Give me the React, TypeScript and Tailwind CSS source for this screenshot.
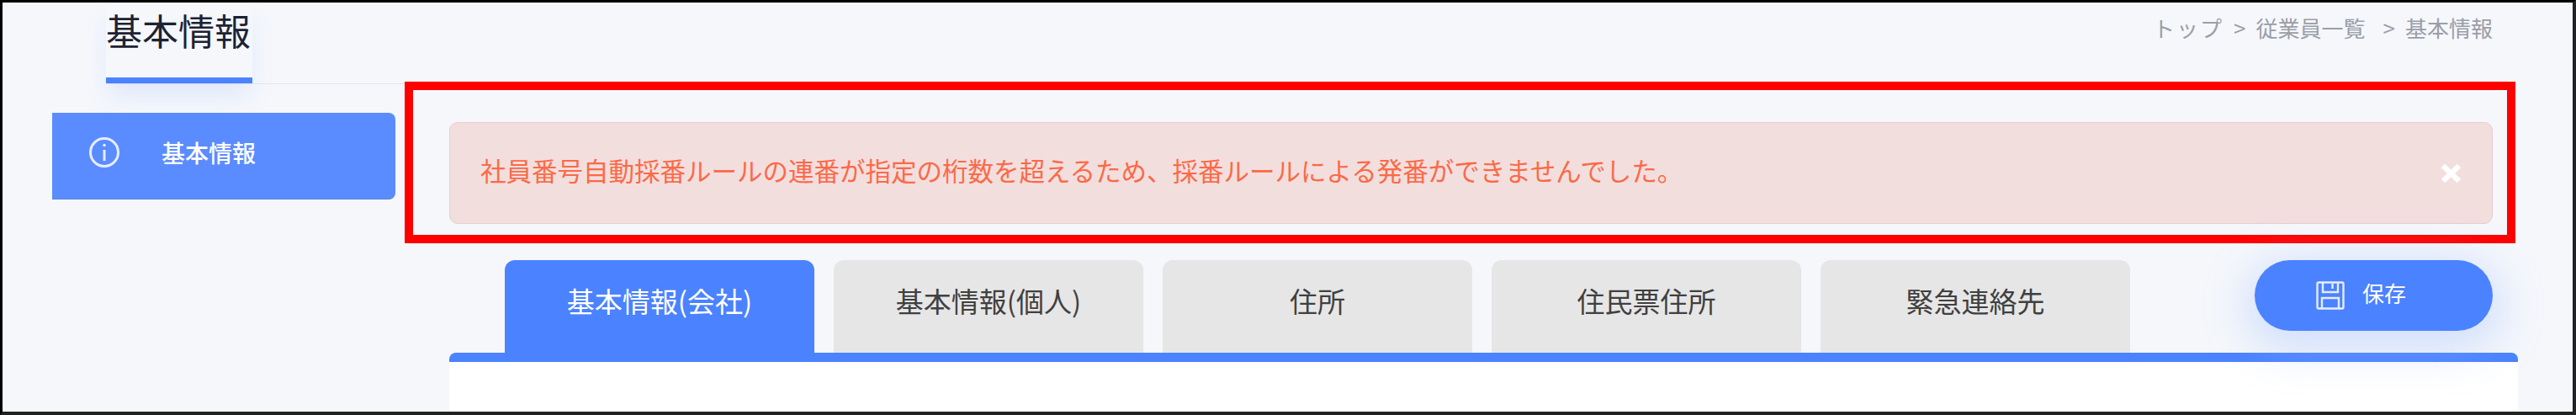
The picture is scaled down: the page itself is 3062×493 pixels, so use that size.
const TABS = ["基本情報(会社)", "基本情報(個人)", "住所", "住民票住所", "緊急連絡先"];

function InfoIcon() {
  return (
    <svg width="38" height="38" viewBox="0 0 38 38" fill="none" stroke="#fff" className="shrink-0 opacity-85">
      <circle cx="19" cy="19" r="16.5" strokeWidth="3" />
      <line x1="19" y1="16" x2="19" y2="29" strokeWidth="3" />
      <circle cx="19" cy="10.5" r="1.8" fill="#fff" stroke="none" />
    </svg>
  );
}

function SaveIcon() {
  return (
    <svg width="34" height="34" viewBox="0 0 34 34" fill="none" stroke="#fff" strokeWidth="2.4" className="shrink-0 opacity-85">
      <path d="M3 1.5H31A1.5 1.5 0 0 1 32.500 3V31A1.500 1.500 0 0 1 31 32.500H3A1.500 1.500 0 0 1 1.500 31V3A1.500 1.500 0 0 1 3 1.500Z" />
      <path d="M8 2V13H26V2" />
      <path d="M19.500 3V9" />
      <path d="M7 32V20H27V32" />
    </svg>
  );
}

function CloseIcon() {
  return (
    <svg width="25" height="24" viewBox="0 0 25 24" stroke="#fff" strokeWidth="6.5" className="shrink-0">
      <line x1="3" y1="3" x2="22" y2="21" />
      <line x1="22" y1="3" x2="3" y2="21" />
    </svg>
  );
}

export default function App() {
  return (
    <div className="relative flex h-[493px] w-[3062px] flex-col overflow-hidden border-t-[3px] border-r-4 border-b-4 border-l-[3px] border-t-black border-r-[#222222] border-b-[#222222] border-l-black bg-[#f5f7fb] font-['Noto_Sans_CJK_JP',sans-serif]">
      <header className="mr-[95px] ml-[123px] flex h-[97px] shrink-0 items-start justify-between border-b border-[#e3e6f0]">
        <div className="h-[96px] w-[174px] border-b-[7px] border-[#4b82ff] pt-[4px] text-[43px] leading-[56px] text-[#1d2233] shadow-[0_18px_30px_-4px_rgba(91,140,255,0.14)]">
          基本情報
        </div>
        <nav className="flex pt-[12px] text-[26px] leading-[36px] text-[#9a9ea8]">
          <span className="tracking-[2px]">トップ</span>
          <span className="ml-[12px]">&gt;</span>
          <span className="ml-[12px]">従業員一覧</span>
          <span className="ml-[21px]">&gt;</span>
          <span className="ml-[12px]">基本情報</span>
        </nav>
      </header>

      <div className="flex min-h-0 flex-1">
        <aside className="ml-[59px] w-[408px] shrink-0 pt-[34px]">
          <div className="flex h-[103px] items-center rounded-r-[8px] border-b border-[#5a84dc] bg-[#5b8cff] pb-[9px] pl-[43px] text-[28px] font-medium text-white">
            <InfoIcon />
            <span className="ml-[49px] leading-none">基本情報</span>
          </div>
        </aside>

        <main className="ml-[64px] flex w-[2459px] min-w-0 flex-col pt-[45px]">
          <div className="mr-[30px] flex h-[121px] shrink-0 items-center justify-between rounded-[10px] border border-[#ebcccc] bg-[#f3dede] pr-[36px] pl-[36px] text-[30.5px] text-[#fb6a47]">
            <span className="pb-[6px]">社員番号自動採番ルールの連番が指定の桁数を超えるため、採番ルールによる発番ができませんでした。</span>
            <CloseIcon />
          </div>

          <div className="mt-[43px] flex shrink-0 items-start pr-[30px] pl-[66px]">
            <div className="flex gap-[23px]">
              {TABS.map((tab, i) => (
                <button
                  key={tab}
                  type="button"
                  className={
                    i === 0
                      ? "h-[110px] w-[368px] rounded-t-[12px] bg-[#4b82ff] pb-[12px] text-[33px] text-white"
                      : "h-[110px] w-[368px] rounded-t-[12px] bg-[#e6e6e6] pb-[12px] text-[33px] text-[#404040]"
                  }
                >
                  {tab}
                </button>
              ))}
            </div>
            <button
              type="button"
              className="relative z-10 ml-auto flex h-[84px] w-[283px] items-center rounded-full bg-[#4b82ff] pl-[73px] text-[26px] text-white shadow-[0_12px_50px_10px_rgba(150,185,255,0.38)]"
            >
              <SaveIcon />
              <span className="mb-[6px] ml-[21px] leading-none">保存</span>
            </button>
          </div>

          <div className="min-h-0 flex-1 rounded-t-[8px] border-t-[11px] border-[#4b82ff] bg-white" />
        </main>
      </div>

      {/* annotation frame drawn over the screenshot */}
      <div className="pointer-events-none absolute top-[94px] left-[478px] h-[192px] w-[2509px] border-x-10 border-y-[10px] border-[#ff0000]" />
    </div>
  );
}
